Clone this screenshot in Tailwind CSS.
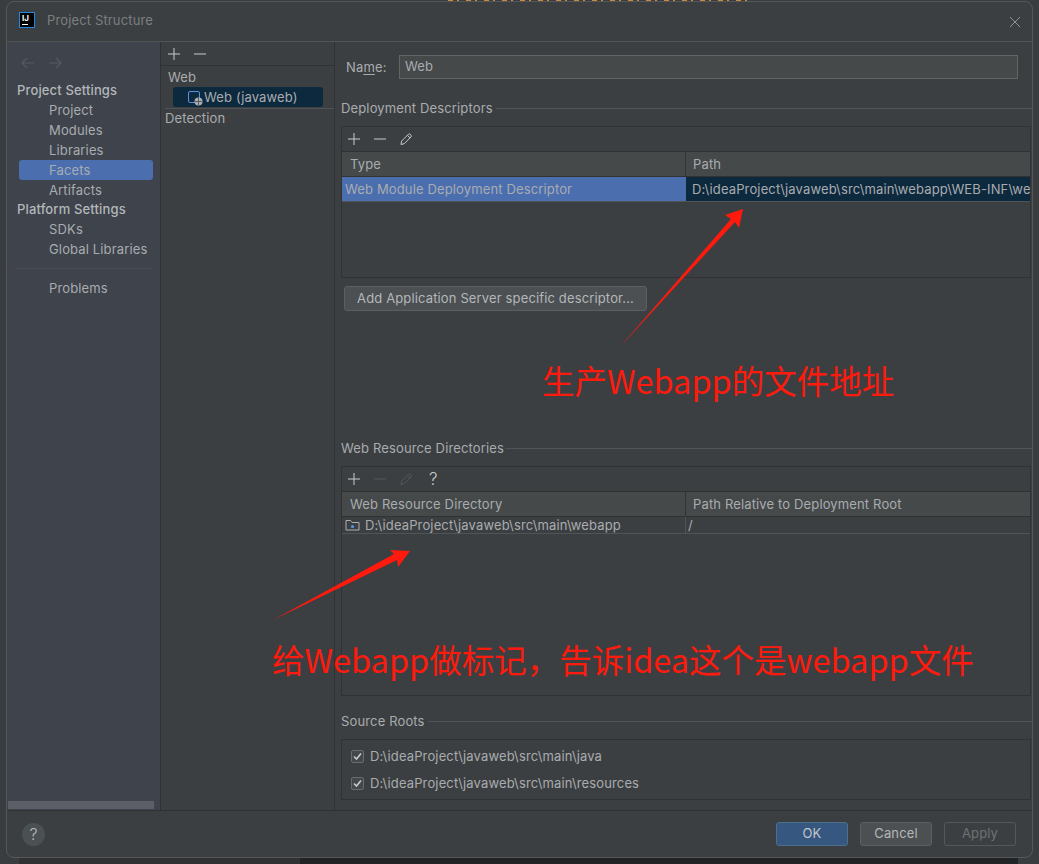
<!DOCTYPE html>
<html lang="en">
<head>
  <meta charset="UTF-8" />
  <title>Project Structure</title>
  <script src="https://cdn.jsdelivr.net/npm/@tailwindcss/browser@4"></script>
</head>
<body class="bg-[#3a3d3f] font-['Inter','Noto_Sans_CJK_SC',sans-serif] text-[13px] tracking-[0.14px] text-[#a9acaf]">
  <div class="relative h-[864px] w-[1039px] overflow-hidden pl-[6px] pt-px">
    <!-- what shows of the window behind the dialog -->
    <div class="absolute bottom-0 left-[19px] h-[8px] w-[281px] bg-[#2f3133]"></div>
    <div class="absolute bottom-0 left-[300px] h-[8px] w-[718px] bg-[#222324]"></div>
    <svg class="absolute left-[448px] top-0 h-px w-[300px]" viewBox="0 0 300 1" fill="none" stroke="#c98a3c" stroke-dasharray="5 4 2 7"><path d="M0 .5h300" /></svg>

    <!-- dialog -->
    <div class="relative flex h-[857px] w-[1027px] flex-col overflow-hidden rounded-[8px] border border-[#55585a] bg-[#3c3f41]">
      <!-- title bar -->
      <div class="flex h-[40px] shrink-0 items-center border-b border-[#515456] pb-[3px] pl-[12px] pr-[11px]">
        <div class="relative h-[16px] w-[16px] border border-[#1e88e5] bg-black">
          <span class="absolute left-[2px] top-[1px] text-[8px] font-bold leading-[8px] tracking-normal text-white">IJ</span>
          <span class="absolute bottom-[2px] left-[2px] h-px w-[6px] bg-white"></span>
        </div>
        <span class="ml-[12px] mt-[2px] text-[#7b7e80]">Project Structure</span>
        <svg class="ml-auto mt-[3px] h-[12px] w-[12px]" viewBox="0 0 12 12" fill="none" stroke="#8f9294" stroke-width="1"><path d="M1 1l10 10M11 1L1 11" /></svg>
      </div>

      <div class="flex min-h-0 flex-1">
        <!-- settings sidebar -->
        <div class="relative w-[153px] shrink-0 bg-[#3e434c]">
          <div class="flex h-[38px] items-center gap-[13px] pl-[14px] pt-[4px]">
            <svg class="h-[12px] w-[14px]" viewBox="0 0 14 12" fill="none" stroke="#565a5f" stroke-width="1.2"><path d="M13 6H1M6 1L1 6l5 5" /></svg>
            <svg class="h-[12px] w-[14px]" viewBox="0 0 14 12" fill="none" stroke="#565a5f" stroke-width="1.2"><path d="M1 6h12M8 1l5 5-5 5" /></svg>
          </div>
          <div class="leading-[20px]">
            <div class="h-[20px] pl-[10px] font-medium text-[#b4b7ba]">Project Settings</div>
            <div class="h-[20px] pl-[42px]">Project</div>
            <div class="h-[20px] pl-[42px]">Modules</div>
            <div class="h-[20px] pl-[42px]">Libraries</div>
            <div class="ml-[12px] mr-[7px] h-[20px] rounded-[3px] bg-[#4b6eaf] pl-[30px]">Facets</div>
            <div class="h-[20px] pl-[42px]">Artifacts</div>
            <div class="h-[19px] pl-[10px] font-medium leading-[18px] text-[#b4b7ba]">Platform Settings</div>
            <div class="h-[20px] pl-[42px]">SDKs</div>
            <div class="h-[20px] pl-[42px]">Global Libraries</div>
            <div class="mx-[8px] my-[9px] h-px bg-[#4a4d4f]"></div>
            <div class="h-[20px] pl-[42px]">Problems</div>
          </div>
          <div class="absolute bottom-px left-px h-[8px] w-[146px] bg-[#5c5f68]"></div>
        </div>

        <!-- facets list -->
        <div class="w-[175px] shrink-0 border-x border-[#323232]">
          <div class="flex h-[24px] items-center gap-[12px] border-b border-[#323232] pl-[6px] pt-px">
            <svg class="h-[14px] w-[14px]" viewBox="0 0 14 14" fill="none" stroke="#c8cacc" stroke-width="1"><path d="M7 1v12M1 7h12" /></svg>
            <svg class="h-[14px] w-[14px]" viewBox="0 0 14 14" fill="none" stroke="#c8cacc" stroke-width="1"><path d="M1 7h12" /></svg>
          </div>
          <div class="h-[21px] pl-[7px] pt-[1px] leading-[20px]">Web</div>
          <div class="ml-[12px] flex h-[20px] w-[150px] items-center rounded-[3px] bg-[#0d293e] pl-[14px] pt-px">
            <svg class="h-[16px] w-[16px]" viewBox="0 0 16 16" fill="none"><rect x="1.5" y="1.5" width="11" height="11" rx="1.5" stroke="#5c8fe0" /><circle cx="11.5" cy="11.5" r="4" fill="#a9adb0" /><path d="M8 11.5h7M11.5 8v7" stroke="#3c3f41" stroke-width=".7" /></svg>
            <span class="ml-[1px]">Web (javaweb)</span>
          </div>
          <div class="ml-[4px] mt-px h-[20px] border-t border-[#515456] leading-[18px]">Detection</div>
        </div>

        <!-- facet details -->
        <div class="min-w-0 flex-1 pl-[6px]">
          <div class="flex h-[37px] items-end pl-[5px]">
            <span class="w-[53px] pb-[2px]">Na<u class="underline-offset-2">m</u>e:</span>
            <div class="flex h-[24px] w-[619px] items-center border border-[#646464] bg-[#45494a] pl-[5px]">Web</div>
          </div>

          <div class="mt-[22px] flex h-[16px] items-center">
            <span>Deployment Descriptors</span>
            <span class="mb-[2px] ml-[3px] h-px flex-1 bg-[#515456]"></span>
          </div>
          <div class="mt-[9px] mr-px h-[152px] border border-[#323232]">
            <div class="flex h-[25px] items-center gap-[12px] border-b border-[#323232] pl-[5px]">
              <svg class="h-[14px] w-[14px]" viewBox="0 0 14 14" fill="none" stroke="#c8cacc" stroke-width="1"><path d="M7 1v12M1 7h12" /></svg>
              <svg class="h-[14px] w-[14px]" viewBox="0 0 14 14" fill="none" stroke="#c8cacc" stroke-width="1"><path d="M1 7h12" /></svg>
              <svg class="h-[14px] w-[14px]" viewBox="0 0 14 14" fill="none" stroke="#c8cacc" stroke-width="1"><path d="M2 12.5l.6-3.4L9.4 2.3a1.2 1.2 0 0 1 1.7 0l.9.9a1.2 1.2 0 0 1 0 1.7L5.2 11.7zM8.4 3.3l2.6 2.6" /></svg>
            </div>
            <div class="flex h-[25px] border-b border-[#323232] bg-[#45494a]">
              <div class="w-[344px] border-r border-[#323232] pl-[8px] leading-[24px]">Type</div>
              <div class="flex-1 pl-[7px] leading-[24px]">Path</div>
            </div>
            <div class="flex h-[25px] border-b border-[#515456]">
              <div class="w-[344px] bg-[#4b6eaf] pl-[3px] leading-[24px]">Web Module Deployment Descriptor</div>
              <div class="min-w-0 flex-1 overflow-hidden whitespace-nowrap bg-[#0d293e] pl-[6px] leading-[24px]">D:\ideaProject\javaweb\src\main\webapp\WEB-INF\web.xml</div>
            </div>
          </div>
          <button class="ml-[3px] mt-[8px] h-[25px] w-[303px] rounded-[3px] border border-[#5e6060] bg-[#4c5052] text-[#b4b7ba]">Add Application Server specific descriptor...</button>

          <div class="mt-[130px] flex h-[16px] items-center">
            <span>Web Resource Directories</span>
            <span class="mb-[2px] ml-[1px] h-px flex-1 bg-[#515456]"></span>
          </div>
          <div class="mt-[9px] mr-px h-[230px] border border-[#323232]">
            <div class="flex h-[25px] items-center gap-[12px] border-b border-[#323232] pl-[5px]">
              <svg class="h-[14px] w-[14px]" viewBox="0 0 14 14" fill="none" stroke="#c8cacc" stroke-width="1"><path d="M7 1v12M1 7h12" /></svg>
              <svg class="h-[14px] w-[14px]" viewBox="0 0 14 14" fill="none" stroke="#55585a" stroke-width="1"><path d="M1 7h12" /></svg>
              <svg class="h-[14px] w-[14px]" viewBox="0 0 14 14" fill="none" stroke="#55585a" stroke-width="1"><path d="M2 12.5l.6-3.4L9.4 2.3a1.2 1.2 0 0 1 1.7 0l.9.9a1.2 1.2 0 0 1 0 1.7L5.2 11.7zM8.4 3.3l2.6 2.6" /></svg>
              <span class="ml-[4px] text-[17px] font-light leading-none text-[#c8cacc]">?</span>
            </div>
            <div class="flex h-[25px] border-b border-[#323232] bg-[#45494a]">
              <div class="w-[344px] border-r border-[#323232] pl-[8px] leading-[24px]">Web Resource Directory</div>
              <div class="flex-1 pl-[7px] leading-[24px]">Path Relative to Deployment Root</div>
            </div>
            <div class="flex h-[17px] border-b border-[#515456]">
              <div class="flex w-[344px] items-center border-r border-[#515456] pl-[3px] leading-[16px]">
                <svg class="mr-[5px] h-[14px] w-[15px]" viewBox="0 0 15 14" fill="none"><path d="M1 12V2.5h4.5L7 4.5h7V12z" stroke="#adb0b3" /><circle cx="7.5" cy="8.5" r="1.6" fill="#5c8fe0" /></svg>
                D:\ideaProject\javaweb\src\main\webapp
              </div>
              <div class="flex-1 pl-[2px] leading-[16px]">/</div>
            </div>
          </div>

          <div class="mt-[18px] flex h-[16px] items-center">
            <span>Source Roots</span>
            <span class="mb-[2px] ml-[3px] h-px flex-1 bg-[#515456]"></span>
          </div>
          <div class="mt-[9px] mr-px h-[61px] border border-[#323232] pl-[9px] pt-[3px]">
            <div class="flex h-[27px] items-center gap-[6px]">
              <span class="flex h-[13px] w-[13px] items-center justify-center rounded-[2px] border border-[#6b6b6b] bg-[#43494a]">
                <svg class="h-[11px] w-[11px]" viewBox="0 0 11 11" fill="none" stroke="#c8cacc" stroke-width="1.6"><path d="M2 5.5l2.5 2.5L9 2.5" /></svg>
              </span>
              D:\ideaProject\javaweb\src\main\java
            </div>
            <div class="flex h-[27px] items-center gap-[6px]">
              <span class="flex h-[13px] w-[13px] items-center justify-center rounded-[2px] border border-[#6b6b6b] bg-[#43494a]">
                <svg class="h-[11px] w-[11px]" viewBox="0 0 11 11" fill="none" stroke="#c8cacc" stroke-width="1.6"><path d="M2 5.5l2.5 2.5L9 2.5" /></svg>
              </span>
              D:\ideaProject\javaweb\src\main\resources
            </div>
          </div>
        </div>
      </div>

      <!-- footer -->
      <div class="flex h-[47px] shrink-0 items-center border-t border-[#323232] pl-[15px] pr-[16px]">
        <span class="flex h-[23px] w-[23px] items-center justify-center rounded-full bg-[#4b5052] text-[16px] font-light text-[#b9bcbe]">?</span>
        <button class="ml-auto h-[24px] w-[72px] rounded-[3px] border border-[#4c708c] bg-[#365880] text-[#c3c6c9]">OK</button>
        <button class="ml-[12px] h-[24px] w-[72px] rounded-[3px] border border-[#5e6060] bg-[#4c5052] text-[#b4b7ba]">Cancel</button>
        <button class="ml-[12px] h-[24px] w-[72px] rounded-[3px] border border-[#55585a] text-[#6f7274]">Apply</button>
      </div>
    </div>

    <!-- red annotations drawn on top of the screenshot -->
    <svg class="absolute left-0 top-0 h-[864px] w-[1039px]" viewBox="0 0 1039 864" fill="#ff1a0d">
      <path d="M619 348L731 219 725 215 743 209 739 228 735 222z" />
      <path d="M273 620L394 554 390 550 410 551 398 567 397 560z" />
    </svg>
    <div class="absolute left-[542px] top-[356px] whitespace-nowrap font-['Noto_Sans_CJK_SC',sans-serif] text-[32.5px] leading-[48px] tracking-normal text-[#ff1a0d]">生产Webapp的文件地址</div>
    <div class="absolute left-[272px] top-[635px] whitespace-nowrap font-['Noto_Sans_CJK_SC',sans-serif] text-[32.5px] leading-[48px] tracking-normal text-[#ff1a0d]">给Webapp做标记，告诉idea这个是webapp文件</div>
  </div>
</body>
</html>
